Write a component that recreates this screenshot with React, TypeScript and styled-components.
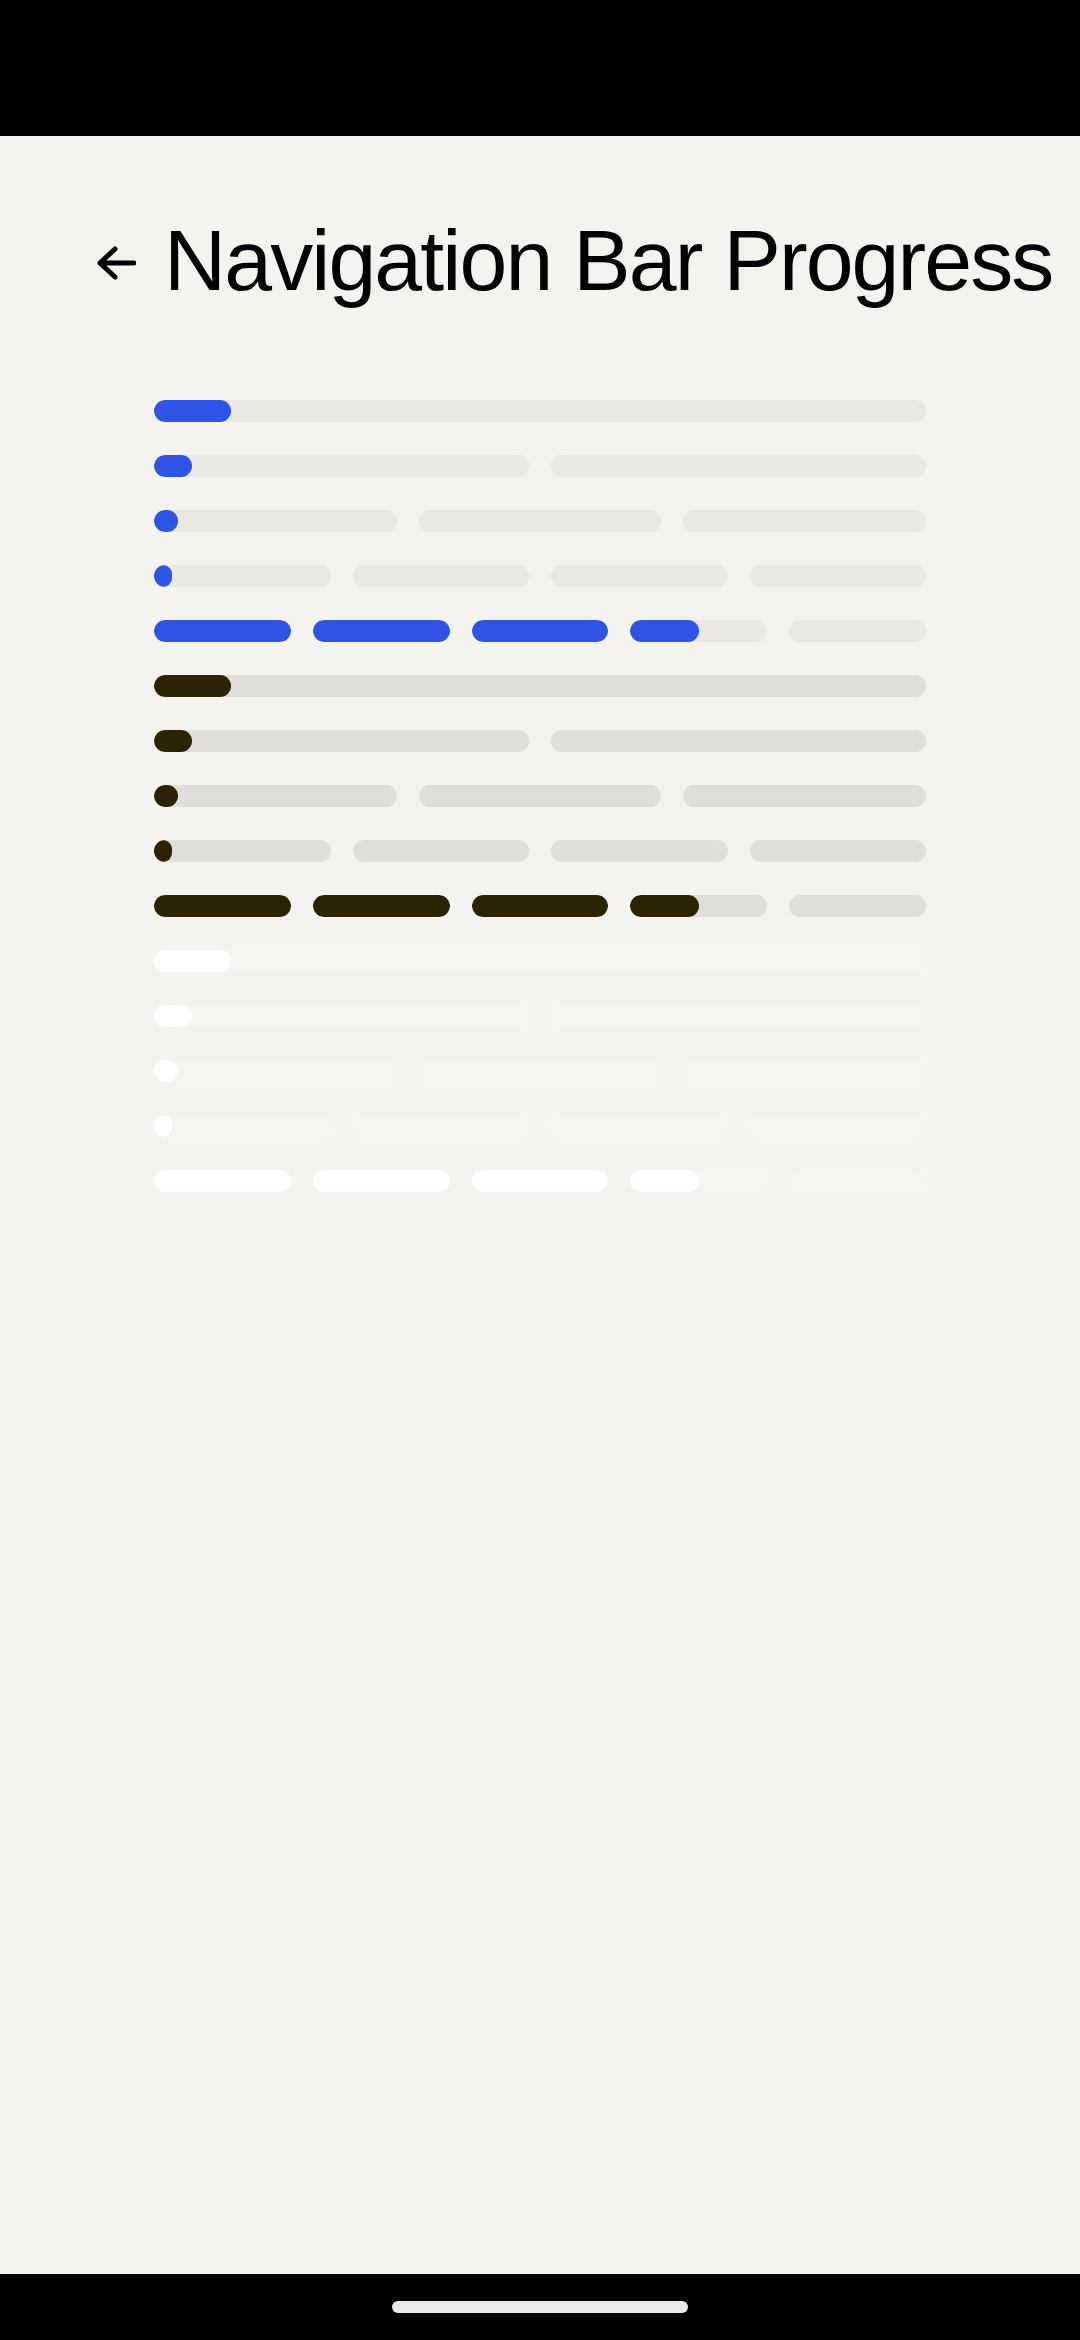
import React from "react";
import styled, { createGlobalStyle } from "styled-components";

const GlobalStyle = createGlobalStyle`
  html, body {
    margin: 0;
    padding: 0;
    background: #f4f3ef;
  }
  #root {
    min-height: 2340px;
  }
`;

const Screen = styled.div`
  display: flex;
  flex-direction: column;
  width: 1080px;
  height: 2340px;
  background: #f4f3ef;
  font-family: "Liberation Sans", Arial, sans-serif;
`;

const StatusBar = styled.div`
  height: 136px;
  background: #000;
  flex-shrink: 0;
`;

const Main = styled.main`
  flex: 1;
  display: flex;
  flex-direction: column;
`;

const Header = styled.header`
  display: flex;
  align-items: center;
  padding: 74px 0 0 96px;
  height: 100px;
`;

const BackButton = styled.button`
  display: flex;
  align-items: center;
  justify-content: center;
  width: 40px;
  height: 34px;
  margin: 6px 28px 0 0;
  padding: 0;
  border: none;
  background: none;
  color: #000;
`;

const Title = styled.h1`
  margin: 0;
  font-size: 86px;
  line-height: 100px;
  font-weight: 400;
  letter-spacing: -1.9px;
  color: #000;
  white-space: nowrap;
`;

const BarList = styled.section`
  display: flex;
  flex-direction: column;
  gap: 33px;
  width: 772px;
  margin: 90px 0 0 154px;
`;

const Row = styled.div`
  display: flex;
  gap: 22px;
`;

type Tone = "blue" | "dark" | "light";

const tones: Record<Tone, { fill: string; track: string }> = {
  blue: { fill: "#2f54e5", track: "#e9e8e3" },
  dark: { fill: "#2b2303", track: "#dfded9" },
  light: { fill: "#ffffff", track: "#f5f4f1" },
};

const Segment = styled.div<{ $tone: Tone }>`
  flex: 1;
  height: 22px;
  border-radius: 11px;
  overflow: hidden;
  background: ${({ $tone }) => tones[$tone].track};
`;

const Fill = styled.div<{ $tone: Tone }>`
  height: 100%;
  border-radius: 11px;
  background: ${({ $tone }) => tones[$tone].fill};
`;

const NavBar = styled.div`
  height: 66px;
  background: #000;
  display: flex;
  justify-content: center;
  padding-top: 27px;
  box-sizing: border-box;
  flex-shrink: 0;
`;

const HomePill = styled.div`
  width: 296px;
  height: 12px;
  border-radius: 6px;
  background: #eaeaea;
`;

function ProgressRow({ tone, segments, progress }: { tone: Tone; segments: number; progress: number }) {
  return (
    <Row>
      {Array.from({ length: segments }).map((_, i) => {
        const amount = Math.max(0, Math.min(1, progress - i));
        return (
          <Segment key={i} $tone={tone}>
            {amount > 0 && <Fill $tone={tone} style={{ width: `${amount * 100}%` }} />}
          </Segment>
        );
      })}
    </Row>
  );
}

const rows = [
  { segments: 1, progress: 0.1 },
  { segments: 2, progress: 0.1 },
  { segments: 3, progress: 0.1 },
  { segments: 4, progress: 0.1 },
  { segments: 5, progress: 3.5 },
];

export default function App() {
  return (
    <>
      <GlobalStyle />
      <Screen>
        <StatusBar />
        <Main>
          <Header>
            <BackButton aria-label="Back">
              <svg width="40" height="34" viewBox="0 0 40 34" fill="none">
                <path
                  d="M19 3 L4 17 L19 31 M4 17 L38 17"
                  stroke="currentColor"
                  strokeWidth="5"
                  strokeLinecap="round"
                  strokeLinejoin="round"
                />
              </svg>
            </BackButton>
            <Title>Navigation Bar Progress</Title>
          </Header>
          <BarList>
            {(["blue", "dark", "light"] as Tone[]).map((tone) =>
              rows.map((r, i) => (
                <ProgressRow key={`${tone}-${i}`} tone={tone} segments={r.segments} progress={r.progress} />
              ))
            )}
          </BarList>
        </Main>
        <NavBar>
          <HomePill />
        </NavBar>
      </Screen>
    </>
  );
}
